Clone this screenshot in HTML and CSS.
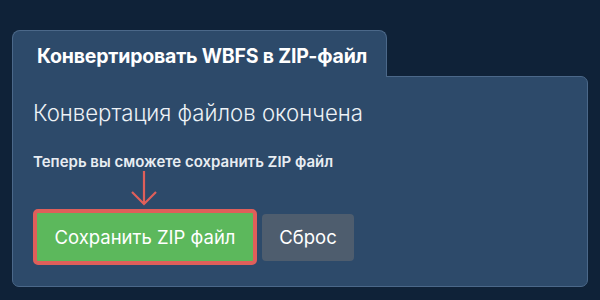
FILE: index.html
```html
<!DOCTYPE html>
<html>
<head>
    <link rel="stylesheet" href="styles.css">
</head>
<body>
    <div class="converter">
        <div class="tab">Конвертировать WBFS в ZIP-файл</div>
        <div class="panel">
            <h2 class="status">Конвертация файлов окончена</h2>
            <p class="hint">Теперь вы сможете сохранить ZIP файл</p>
            <div class="actions">
                <div class="save-wrap">
                    <svg class="arrow" width="28" height="36" viewBox="0 0 28 36">
                        <path d="M14 1 V34 M2 22 L14 34 L26 22" fill="none" stroke="#df5f5a" stroke-width="2.2"/>
                    </svg>
                    <button class="btn btn-save">Сохранить ZIP файл</button>
                </div>
                <button class="btn btn-reset">Сброс</button>
            </div>
        </div>
    </div>
</body>
</html>
```
FILE: styles.css
```css
* {
    margin: 0;
    padding: 0;
    box-sizing: border-box;
}

body {
    width: 600px;
    height: 300px;
    background: #0f2238;
    font-family: 'Inter', 'Noto Sans', sans-serif;
    color: #fff;
    overflow: hidden;
}

.converter {
    padding: 30px 12px 0 12px;
}

.tab {
    position: relative;
    z-index: 1;
    width: 375px;
    height: 47px;
    margin-bottom: -1px;
    padding: 13px 0 0 24px;
    background: #2d4a6a;
    border: 1px solid #4b6889;
    border-bottom: none;
    border-radius: 8px 8px 0 0;
    font-size: 19.5px;
    font-weight: 700;
    letter-spacing: -0.2px;
}

.panel {
    height: 211px;
    background: #2d4a6a;
    border: 1px solid #4b6889;
    border-radius: 0 7px 7px 7px;
    padding: 20px 20px 0 20px;
}

.status {
    font-size: 22.2px;
    font-weight: 300;
    color: #eef2f6;
    line-height: 32px;
}

.hint {
    margin-top: 23px;
    font-size: 15px;
    font-weight: 600;
    color: #e8edf2;
}

.actions {
    display: flex;
    align-items: center;
    gap: 5px;
    margin-top: 38px;
}

.save-wrap {
    position: relative;
}

.arrow {
    position: absolute;
    left: 97px;
    top: -39px;
}

.btn {
    height: 47px;
    border: none;
    border-radius: 4px;
    color: #fff;
    font-family: inherit;
    font-size: 18.5px;
    font-weight: 400;
}

.btn-save {
    width: 224px;
    height: 56px;
    background: #5cb85c;
    border: 4px solid #df5f5a;
    border-radius: 5px;
}

.btn-reset {
    width: 92px;
    background: #4e5d6e;
}
```
